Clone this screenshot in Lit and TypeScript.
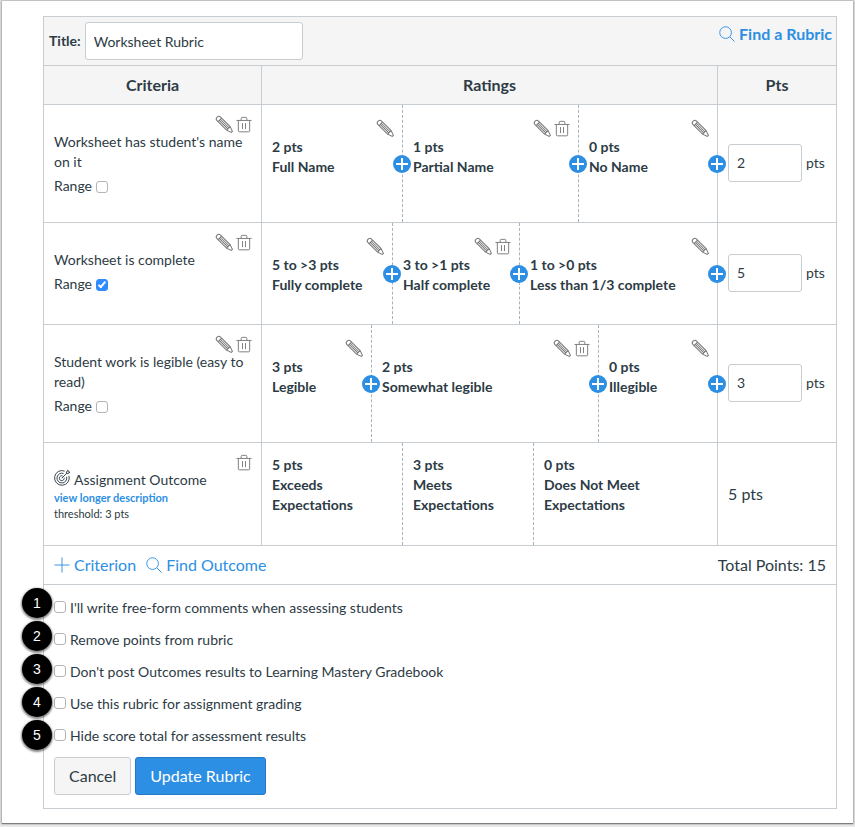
import { LitElement, html, svg, css, nothing } from "lit";
import { customElement, state } from "lit/decorators.js";

interface Rating {
  points: string;
  label: string;
  share: number;
  removable?: boolean;
}

interface Criterion {
  id: string;
  text: string;
  range?: boolean;
  points: number;
  outcome?: boolean;
  ratings: Rating[];
}

const CRITERIA: Criterion[] = [
  {
    id: "name",
    text: "Worksheet has student's name on it",
    range: false,
    points: 2,
    ratings: [
      { points: "2 pts", label: "Full Name", share: 141 },
      { points: "1 pts", label: "Partial Name", share: 176, removable: true },
      { points: "0 pts", label: "No Name", share: 138 },
    ],
  },
  {
    id: "complete",
    text: "Worksheet is complete",
    range: true,
    points: 5,
    ratings: [
      { points: "5 to >3 pts", label: "Fully complete", share: 131 },
      { points: "3 to >1 pts", label: "Half complete", share: 127, removable: true },
      { points: "1 to >0 pts", label: "Less than 1/3 complete", share: 197 },
    ],
  },
  {
    id: "legible",
    text: "Student work is legible (easy to read)",
    range: false,
    points: 3,
    ratings: [
      { points: "3 pts", label: "Legible", share: 110 },
      { points: "2 pts", label: "Somewhat legible", share: 227, removable: true },
      { points: "0 pts", label: "Illegible", share: 118 },
    ],
  },
  {
    id: "outcome",
    text: "Assignment Outcome",
    points: 5,
    outcome: true,
    ratings: [
      { points: "5 pts", label: "Exceeds Expectations", share: 141 },
      { points: "3 pts", label: "Meets Expectations", share: 131 },
      { points: "0 pts", label: "Does Not Meet Expectations", share: 183 },
    ],
  },
];

const OPTIONS = [
  "I'll write free-form comments when assessing students",
  "Remove points from rubric",
  "Don't post Outcomes results to Learning Mastery Gradebook",
  "Use this rubric for assignment grading",
  "Hide score total for assessment results",
];

const icon = (body: unknown, cls = "icon") =>
  html`<svg class=${cls} viewBox="0 0 17 17" aria-hidden="true">${body}</svg>`;

const pencil = () =>
  icon(svg`<g transform="translate(8.5 8.5) rotate(45)">
    <path d="M-8.4 -2.5H5.4L10.4 -0.8V0.8L5.4 2.5H-8.4Q-10.4 2.5 -10.4 0T-8.4 -2.5Z"/>
    <path d="M-6.6 -2.5V2.5M5.4 -2.5V2.5M-6.6 -0.8H5.4M-6.6 0.8H5.4"/>
  </g>`);

const trash = () =>
  icon(svg`<path d="M0.5 4.2H16.5M5.5 4.2V2Q5.5 0.9 6.6 0.9H10.4Q11.5 0.9 11.5 2V4.2M2.5 4.2V15.2Q2.5 16.3 3.6 16.3H13.4Q14.5 16.3 14.5 15.2V4.2M6.9 7V13.4M10.1 7V13.4"/>`, "icon bin");

const search = () => icon(svg`<circle cx="7" cy="7" r="6.2"/><path d="M11.6 11.6L16.5 16.5"/>`, "icon glass");

const plus = () => icon(svg`<path d="M8.5 0.5V16.5M0.5 8.5H16.5"/>`, "icon glass");

const target = () =>
  icon(
    svg`<path d="M11.4 1.2A7.8 7.8 0 1 0 15.9 6.2M10.2 3.7A5.2 5.2 0 1 0 13.4 7.2M9.2 6.3A2.6 2.6 0 1 0 10.8 8.2"/>
    <path d="M8.2 8.8L13.2 3.8M13.2 3.8V1.9L15 0.2V2.2H17L15.2 3.8Z"/>`,
    "icon dark",
  );

@customElement("app-root")
export class AppRoot extends LitElement {
  @state() private criteria = CRITERIA;

  static styles = css`
    :host {
      display: block;
      box-sizing: border-box;
      min-height: 100vh;
      padding: 1px 2px 3px;
      background: #e9e9e9;
      color: #2d3b45;
      font: 14px/20px Lato, sans-serif;
    }
    *, *::before, *::after { box-sizing: border-box; }
    .sheet {
      padding: 15px 16px 14px 41px;
      background: #fff;
      box-shadow: 0 0 2px 1px rgba(0, 0, 0, 0.25), 0 1px 1px rgba(0, 0, 0, 0.35);
    }
    .rubric { border: 1px solid #c7cdd1; }
    .titlebar {
      display: flex;
      align-items: flex-start;
      justify-content: space-between;
      padding: 5px 4px 5px 5px;
      background: #f5f5f5;
      border-bottom: 1px solid #c7cdd1;
    }
    .title-field { display: flex; align-items: center; gap: 4px; font-weight: 700; }
    .text-input {
      height: 38px;
      padding: 0 8px;
      border: 1px solid #c7cdd1;
      border-radius: 3px;
      background: #fff;
      color: #2d3b45;
      font: 14px/20px Lato, sans-serif;
    }
    .title-input { width: 218px; }
    .points-input { width: 74px; }
    .link-button {
      display: inline-flex;
      align-items: center;
      gap: 4px;
      padding: 0;
      border: 0;
      background: none;
      color: #2d8fe3;
      font: 16px/24px Lato, sans-serif;
      cursor: pointer;
    }
    .strong { font-weight: 700; }
    .icon {
      display: block;
      flex: none;
      width: 17px;
      height: 17px;
      fill: none;
      stroke: #777;
      stroke-width: 1;
      overflow: visible;
    }
    .bin { width: 16px; }
    .glass { width: 16px; height: 16px; stroke: #2d8fe3; }
    .dark { width: 16px; height: 16px; stroke: #2d3b45; }
    .grid { width: 100%; border-collapse: separate; border-spacing: 0; table-layout: fixed; }
    .col-criteria { width: 218px; }
    .col-points { width: 118px; }
    .head {
      height: 39px;
      padding: 0;
      background: #f5f5f5;
      border-right: 1px solid #c7cdd1;
      border-bottom: 1px solid #c7cdd1;
      font-size: 16px;
      font-weight: 700;
    }
    .head:last-child, .cell:last-child { border-right: 0; }
    .row { height: 102px; }
    .row.outcome { height: 103px; }
    .cell {
      height: 1px;
      padding: 0;
      border-right: 1px solid #c7cdd1;
      border-bottom: 1px solid #c7cdd1;
      text-align: left;
      vertical-align: top;
      font-weight: 400;
    }
    .criterion { padding: 11px 9px 26px 10px; }
    .outcome .criterion { padding-bottom: 10px; }
    .tools { display: flex; justify-content: flex-end; gap: 3px; height: 16px; }
    .tool { padding: 0; border: 0; background: none; cursor: pointer; }
    .range { display: flex; align-items: center; gap: 4px; margin-top: 4px; }
    .check {
      appearance: none;
      display: grid;
      place-content: center;
      flex: none;
      width: 12px;
      height: 12px;
      margin: 0;
      border: 1px solid #b4b4b4;
      border-radius: 3px;
      background: #fff;
    }
    .range .check { margin-top: 2px; }
    .check:checked { background: #2f8cff; border-color: #2f8cff; }
    .check:checked::after {
      content: "";
      width: 4px;
      height: 8px;
      margin-bottom: 2px;
      border: solid #fff;
      border-width: 0 2px 2px 0;
      transform: rotate(40deg);
    }
    .outcome-name { display: flex; gap: 4px; }
    .description {
      display: block;
      width: max-content;
      color: #2d8fe3;
      font-size: 11px;
      line-height: 16px;
      font-weight: 700;
      text-decoration: none;
    }
    .threshold { font-size: 11px; line-height: 16px; }
    .ratings { display: grid; height: 100%; }
    .rating {
      position: relative;
      min-width: 0;
      padding: 12px 8px 12px 10px;
      border-right: 1px dashed #a9b2b8;
      font-weight: 700;
    }
    .rating:last-child { border-right: 0; }
    .rating .tools { height: 20px; padding-top: 3px; }
    .rating-text { width: min-content; min-width: 96px; }
    .rating-label { white-space: nowrap; }
    .outcome .rating-label { white-space: normal; }
    .add {
      position: absolute;
      top: calc(50% - 9px);
      right: -9px;
      z-index: 1;
      display: grid;
      place-items: center;
      width: 18px;
      height: 18px;
      padding: 0;
      border: 0;
      border-radius: 50%;
      background: #2d8fe3;
      cursor: pointer;
    }
    .add-icon { display: block; width: 12px; height: 12px; fill: none; stroke: #fff; stroke-width: 2; }
    .points { vertical-align: middle; padding-left: 10px; }
    .points-field { display: flex; align-items: center; gap: 4px; padding-bottom: 2px; }
    .fixed-points { font-size: 16px; }
    .footer {
      display: flex;
      align-items: center;
      gap: 10px;
      height: 39px;
      padding: 0 10px;
      border-bottom: 1px solid #c7cdd1;
      font-size: 16px;
    }
    .total { margin-left: auto; }
    .settings { position: relative; padding: 13px 10px; }
    .options { display: grid; gap: 12px; margin: 0 0 11px; padding: 0; list-style: none; }
    .option { display: flex; gap: 4px; }
    .option .check { margin-top: 3px; }
    .markers {
      position: absolute;
      top: 3px;
      left: -22px;
      display: grid;
      gap: 3px;
    }
    .marker {
      display: grid;
      place-items: center;
      width: 30px;
      height: 30px;
      border-radius: 50%;
      background: #000;
      box-shadow: 0 1px 2px 1px rgba(0, 0, 0, 0.45);
      color: #fff;
      font-family: "Liberation Sans", sans-serif;
    }
    .actions { display: flex; gap: 4px; }
    .button {
      height: 38px;
      padding: 0 14px;
      border: 1px solid #c7cdd1;
      border-radius: 3px;
      background: #f5f5f5;
      color: #2d3b45;
      font: 16px/20px Lato, sans-serif;
      cursor: pointer;
    }
    .primary { border-color: #2479c6; background: #2d8fe3; color: #fff; }
  `;

  private toggleRange(id: string) {
    this.criteria = this.criteria.map((c) => (c.id === id ? { ...c, range: !c.range } : c));
  }

  private renderTools(edit: boolean, remove: boolean, what: string) {
    return html`<div class="tools">
      ${edit ? html`<button class="tool" type="button" aria-label="Edit ${what}">${pencil()}</button>` : nothing}
      ${remove ? html`<button class="tool" type="button" aria-label="Delete ${what}">${trash()}</button>` : nothing}
    </div>`;
  }

  private renderRating(r: Rating, editable: boolean) {
    return html`<div class="rating">
      ${editable ? this.renderTools(true, !!r.removable, r.label) : nothing}
      <div class="rating-text">
        <div>${r.points}</div>
        <div class="rating-label">${r.label}</div>
      </div>
      ${editable
        ? html`<button class="add" type="button" aria-label="Add rating after ${r.label}">
            <svg class="add-icon" viewBox="0 0 12 12" aria-hidden="true"><path d="M6 0V12M0 6H12" /></svg>
          </button>`
        : nothing}
    </div>`;
  }

  private renderCriterion(c: Criterion) {
    const columns = c.ratings.map((r) => `minmax(0, ${r.share}fr)`).join(" ");
    return html`<tr class="row ${c.outcome ? "outcome" : ""}">
      <th class="cell criterion" scope="row">
        ${this.renderTools(!c.outcome, true, c.text)}
        ${c.outcome
          ? html`<div class="outcome-name">${target()}<span>${c.text}</span></div>
              <a class="description" href="#description">view longer description</a>
              <div class="threshold">threshold: 3 pts</div>`
          : html`<div>${c.text}</div>
              <div class="range">
                <label for="range-${c.id}">Range</label>
                <input class="check" type="checkbox" id="range-${c.id}" .checked=${!!c.range}
                  @change=${() => this.toggleRange(c.id)} />
              </div>`}
      </th>
      <td class="cell">
        <div class="ratings" style="grid-template-columns: ${columns}">
          ${c.ratings.map((r) => this.renderRating(r, !c.outcome))}
        </div>
      </td>
      <td class="cell points">
        ${c.outcome
          ? html`<span class="fixed-points">${c.points} pts</span>`
          : html`<div class="points-field">
              <input class="text-input points-input" id="points-${c.id}" .value=${String(c.points)} />
              <label for="points-${c.id}">pts</label>
            </div>`}
      </td>
    </tr>`;
  }

  render() {
    const total = this.criteria.reduce((sum, c) => sum + c.points, 0);
    return html`<main class="sheet">
      <section class="rubric">
        <header class="titlebar">
          <div class="title-field">
            <label for="title">Title:</label>
            <input class="text-input title-input" id="title" value="Worksheet Rubric" />
          </div>
          <button class="link-button strong" type="button">${search()}Find a Rubric</button>
        </header>
        <table class="grid">
          <colgroup>
            <col class="col-criteria" />
            <col />
            <col class="col-points" />
          </colgroup>
          <thead>
            <tr>
              <th class="head" scope="col">Criteria</th>
              <th class="head" scope="col">Ratings</th>
              <th class="head" scope="col">Pts</th>
            </tr>
          </thead>
          <tbody>
            ${this.criteria.map((c) => this.renderCriterion(c))}
          </tbody>
        </table>
        <div class="footer">
          <button class="link-button" type="button">${plus()}Criterion</button>
          <button class="link-button" type="button">${search()}Find Outcome</button>
          <span class="total">Total Points: ${total}</span>
        </div>
        <div class="settings">
          <ul class="options">
            ${OPTIONS.map(
              (o, i) => html`<li class="option">
                <input class="check" type="checkbox" id="option-${i}" />
                <label for="option-${i}">${o}</label>
              </li>`,
            )}
          </ul>
          <div class="markers">${OPTIONS.map((_, i) => html`<span class="marker">${i + 1}</span>`)}</div>
          <div class="actions">
            <button class="button" type="button">Cancel</button>
            <button class="button primary" type="button">Update Rubric</button>
          </div>
        </div>
      </section>
    </main>`;
  }
}
